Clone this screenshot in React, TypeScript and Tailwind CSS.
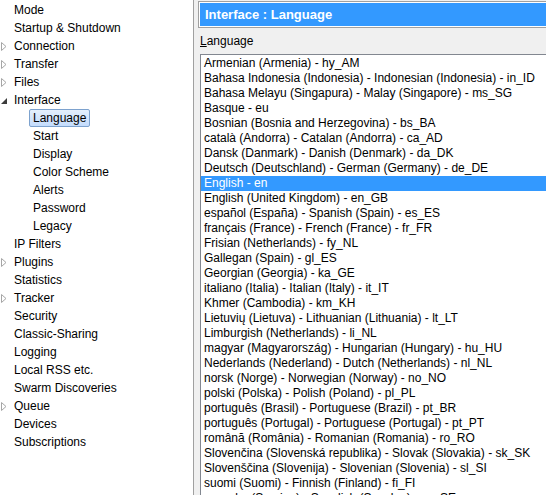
import React from 'react'

type Node = { label: string; level: 0 | 1; arrow?: 'closed' | 'open'; selected?: boolean }

const tree: Node[] = [
  { label: 'Mode', level: 0 },
  { label: 'Startup & Shutdown', level: 0 },
  { label: 'Connection', level: 0, arrow: 'closed' },
  { label: 'Transfer', level: 0, arrow: 'closed' },
  { label: 'Files', level: 0, arrow: 'closed' },
  { label: 'Interface', level: 0, arrow: 'open' },
  { label: 'Language', level: 1, selected: true },
  { label: 'Start', level: 1 },
  { label: 'Display', level: 1 },
  { label: 'Color Scheme', level: 1 },
  { label: 'Alerts', level: 1 },
  { label: 'Password', level: 1 },
  { label: 'Legacy', level: 1 },
  { label: 'IP Filters', level: 0 },
  { label: 'Plugins', level: 0, arrow: 'closed' },
  { label: 'Statistics', level: 0 },
  { label: 'Tracker', level: 0, arrow: 'closed' },
  { label: 'Security', level: 0 },
  { label: 'Classic-Sharing', level: 0 },
  { label: 'Logging', level: 0 },
  { label: 'Local RSS etc.', level: 0 },
  { label: 'Swarm Discoveries', level: 0 },
  { label: 'Queue', level: 0, arrow: 'closed' },
  { label: 'Devices', level: 0 },
  { label: 'Subscriptions', level: 0 },
]

const languages = [
  'Armenian (Armenia) - hy_AM',
  'Bahasa Indonesia (Indonesia) - Indonesian (Indonesia) - in_ID',
  'Bahasa Melayu (Singapura) - Malay (Singapore) - ms_SG',
  'Basque - eu',
  'Bosnian (Bosnia and Herzegovina) - bs_BA',
  'català (Andorra) - Catalan (Andorra) - ca_AD',
  'Dansk (Danmark) - Danish (Denmark) - da_DK',
  'Deutsch (Deutschland) - German (Germany) - de_DE',
  'English - en',
  'English (United Kingdom) - en_GB',
  'español (España) - Spanish (Spain) - es_ES',
  'français (France) - French (France) - fr_FR',
  'Frisian (Netherlands) - fy_NL',
  'Gallegan (Spain) - gl_ES',
  'Georgian (Georgia) - ka_GE',
  'italiano (Italia) - Italian (Italy) - it_IT',
  'Khmer (Cambodia) - km_KH',
  'Lietuvių (Lietuva) - Lithuanian (Lithuania) - lt_LT',
  'Limburgish (Netherlands) - li_NL',
  'magyar (Magyarország) - Hungarian (Hungary) - hu_HU',
  'Nederlands (Nederland) - Dutch (Netherlands) - nl_NL',
  'norsk (Norge) - Norwegian (Norway) - no_NO',
  'polski (Polska) - Polish (Poland) - pl_PL',
  'português (Brasil) - Portuguese (Brazil) - pt_BR',
  'português (Portugal) - Portuguese (Portugal) - pt_PT',
  'română (România) - Romanian (Romania) - ro_RO',
  'Slovenčina (Slovenská republika) - Slovak (Slovakia) - sk_SK',
  'Slovenščina (Slovenija) - Slovenian (Slovenia) - sl_SI',
  'suomi (Suomi) - Finnish (Finland) - fi_FI',
  'svenska (Sverige) - Swedish (Sweden) - sv_SE',
]

const Arrow = ({ kind }: { kind: 'closed' | 'open' }) =>
  kind === 'closed' ? (
    <svg width="6" height="9" viewBox="0 0 6 9" className="absolute left-[1px] top-[5px]">
      <path d="M0.5 0.5 L5 4.5 L0.5 8.5 Z" fill="#fff" stroke="#a6a6a6" />
    </svg>
  ) : (
    <svg width="6" height="6" viewBox="0 0 6 6" className="absolute left-[1px] top-[7px]">
      <path d="M6 0 L6 6 L0 6 Z" fill="#3c3c3c" />
    </svg>
  )

const App = () => {
  return (
    <div className="w-[546px] h-[495px] flex overflow-hidden bg-[#f0f0f0] text-[12px] text-black font-['Liberation_Sans',Arial,sans-serif]">
      <div className="w-[194px] h-full bg-white border-r border-[#a0a0a0] pt-[1px] shrink-0">
        {tree.map((n) => (
          <div key={n.label} className="relative h-[18px] flex items-center">
            {n.arrow && <Arrow kind={n.arrow} />}
            <span
              className={
                (n.level === 1 ? 'ml-[29px] ' : 'ml-[10px] ') +
                'h-[18px] leading-[16px] px-[3px] rounded-[2px] border ' +
                (n.selected
                  ? 'border-[#7da2ce] bg-gradient-to-b from-[#e4effc] to-[#c4dcfc]'
                  : 'border-transparent')
              }
            >
              {n.label}
            </span>
          </div>
        ))}
      </div>
      <div className="flex-1 min-w-0 pl-[4px] pt-[1px] flex flex-col">
        <div className="h-[27px] border border-[#a0a0a0] border-r-0 p-[1px] pr-0 bg-white">
          <div className="h-full bg-[#3399ff] text-white font-bold text-[13px] leading-[23px] pl-[5px] whitespace-nowrap">
            Interface : Language
          </div>
        </div>
        <div className="pl-[2px] h-[26px] flex items-center whitespace-nowrap">
          <span>
            <span className="underline">L</span>anguage
          </span>
        </div>
        <div className="ml-[2px] flex-1 bg-white border-l border-t border-[#828790] pt-[1px] overflow-hidden">
          {languages.map((l) => (
            <div
              key={l}
              className={
                'h-[15px] leading-[15px] pl-[3px] whitespace-nowrap ' +
                (l === 'English - en' ? 'bg-[#3399ff] text-white' : '')
              }
            >
              {l}
            </div>
          ))}
        </div>
      </div>
    </div>
  )
}

export default App
